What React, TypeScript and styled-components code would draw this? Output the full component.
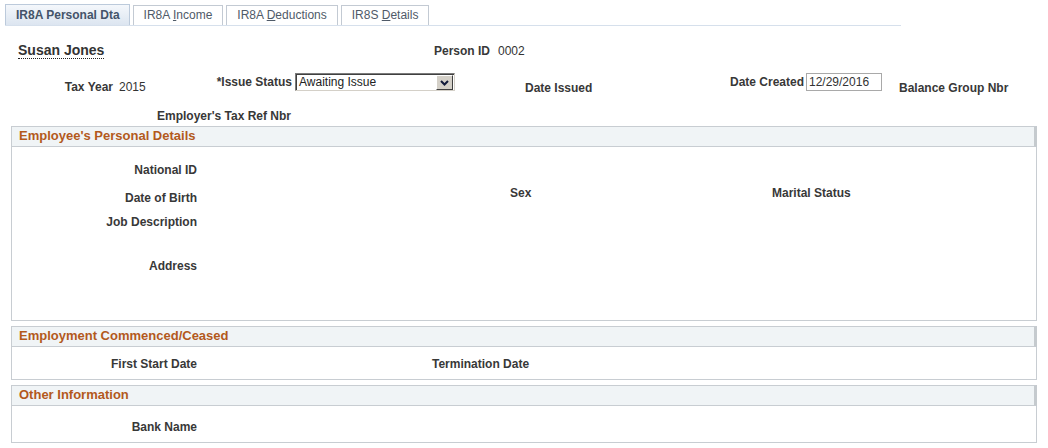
import React from "react";
import styled, { createGlobalStyle, css } from "styled-components";

const Global = createGlobalStyle`
  html, body { margin: 0; padding: 0; background: #ffffff; }
  body { font-family: "Liberation Sans", Arial, sans-serif; font-size: 12px; color: #333333; }
  * { box-sizing: border-box; }
`;

const Page = styled.div`
  width: 1048px;
  height: 448px;
  overflow: hidden;
  display: flex;
  flex-direction: column;
`;

const TabBar = styled.div`
  margin: 4px 0 0 5px;
  width: 896px;
  height: 22px;
  display: flex;
  align-items: flex-end;
  gap: 3px;
  border-bottom: 1px solid #d6e0ec;
`;

const Tab = styled.div<{ $active?: boolean }>`
  height: 20px;
  padding: 0 10px;
  border: 1px solid #c3cad3;
  border-bottom: none;
  background: #ffffff;
  color: #4f5a68;
  font-size: 12px;
  line-height: 19px;
  white-space: nowrap;
  ${(p) =>
    p.$active &&
    css`
      height: 21px;
      padding: 0 9px 0 10px;
      border-color: #bccadb;
      background: linear-gradient(#f4f7fb, #dce5f0);
      color: #44546a;
      font-weight: bold;
      line-height: 20px;
    `}
  u { text-decoration: underline; }
`;

const Row = styled.div<{ $h: number; $pt?: number }>`
  display: flex;
  align-items: flex-start;
  height: ${(p) => p.$h}px;
  padding-top: ${(p) => p.$pt ?? 0}px;
  flex: none;
`;

const Cell = styled.div<{ $w?: number; $right?: boolean; $pt?: number; $pl?: number }>`
  flex: none;
  ${(p) => (p.$w ? `width: ${p.$w}px;` : "")}
  text-align: ${(p) => (p.$right ? "right" : "left")};
  padding-top: ${(p) => p.$pt ?? 0}px;
  padding-left: ${(p) => p.$pl ?? 0}px;
  line-height: 14px;
  white-space: nowrap;
`;

const Label = styled.span`
  font-weight: bold;
  font-size: 12px;
  color: #383838;
`;

const Value = styled.span`
  font-size: 12px;
  color: #333333;
`;

const Name = styled.span`
  display: inline-block;
  margin-left: 18px;
  width: 300px;
  font-size: 14px;
  font-weight: bold;
  line-height: 16px;
  color: #333333;
  span {
    border-bottom: 1px dotted #222;
    display: inline-block;
    line-height: 16px;
  }
`;

const SelectBox = styled.div`
  flex: none;
  margin-left: 3px;
  width: 160px;
  height: 18px;
  display: flex;
  align-items: stretch;
  border: 1px solid;
  border-color: #7c7c7c #d4d0c8 #d4d0c8 #7c7c7c;
  box-shadow: inset 1px 1px 0 #404040;
  background: #ffffff;
`;

const SelectText = styled.div`
  flex: 1;
  padding: 1px 0 0 3px;
  font-size: 12px;
  line-height: 14px;
  color: #222;
`;

const SelectButton = styled.div`
  width: 17px;
  margin: 1px 1px 0 0;
  background: #d4d0c8;
  border: 1px solid;
  border-color: #ffffff #404040 #404040 #ffffff;
  display: flex;
  align-items: center;
  justify-content: center;
`;

const DateInput = styled.div`
  flex: none;
  margin-left: 3px;
  width: 76px;
  height: 18px;
  border: 1px solid #a9a9a9;
  padding: 1px 0 0 2px;
  font-size: 12px;
  line-height: 14px;
  color: #333;
`;

const Section = styled.section<{ $gap?: number }>`
  flex: none;
  margin-left: 11px;
  margin-top: ${(p) => p.$gap ?? 0}px;
  width: 1026px;
`;

const SectionHeader = styled.div`
  height: 21px;
  border: 1px solid #c8cdd2;
  border-right: 3px solid #c5cace;
  background: #f0f4f6;
  padding-left: 7px;
  font-size: 13px;
  font-weight: bold;
  line-height: 17px;
  color: #b3591c;
`;

const SectionBody = styled.div<{ $h: number; $pt: number }>`
  height: ${(p) => p.$h}px;
  padding-top: ${(p) => p.$pt}px;
  border: 1px solid #c8cdd2;
  border-top: none;
  background: #ffffff;
  display: flex;
  flex-direction: column;
`;

const BodyRow = styled.div<{ $h?: number }>`
  display: flex;
  align-items: flex-start;
  ${(p) => (p.$h ? `height: ${p.$h}px;` : "")}
  flex: none;
`;

const Chevron = () => (
  <svg width="9" height="6" viewBox="0 0 9 6">
    <path d="M1 1 L4.5 4.5 L8 1" fill="none" stroke="#111a3a" strokeWidth="2" />
  </svg>
);

export default function App() {
  return (
    <>
      <Global />
      <Page>
        <TabBar>
          <Tab $active>IR8A Personal Dta</Tab>
          <Tab>
            IR8A <u>I</u>ncome
          </Tab>
          <Tab>
            IR8A <u>D</u>eductions
          </Tab>
          <Tab>
            IR8S <u>D</u>etails
          </Tab>
        </TabBar>

        <Row $h={47} $pt={16}>
          <Name>
            <span>Susan Jones</span>
          </Name>
          <Cell $w={172} $right $pt={2}>
            <Label>Person ID</Label>
          </Cell>
          <Cell $pl={8} $pt={2}>
            <Value>0002</Value>
          </Cell>
        </Row>

        <Row $h={35}>
          <Cell $w={113} $right $pt={7}>
            <Label>Tax Year</Label>
          </Cell>
          <Cell $w={103} $pl={6} $pt={7}>
            <Value>2015</Value>
          </Cell>
          <Cell $w={76} $right $pt={2}>
            <Label>*Issue Status</Label>
          </Cell>
          <SelectBox>
            <SelectText>Awaiting Issue</SelectText>
            <SelectButton>
              <Chevron />
            </SelectButton>
          </SelectBox>
          <Cell $w={275} $pl={70} $pt={8}>
            <Label>Date Issued</Label>
          </Cell>
          <Cell $w={73} $right $pt={2}>
            <Label>Date Created</Label>
          </Cell>
          <DateInput>12/29/2016</DateInput>
          <Cell $pl={17} $pt={8}>
            <Label>Balance Group Nbr</Label>
          </Cell>
        </Row>

        <Row $h={18} $pt={1}>
          <Cell $w={291} $right>
            <Label>Employer's Tax Ref Nbr</Label>
          </Cell>
        </Row>

        <Section>
          <SectionHeader>Employee's Personal Details</SectionHeader>
          <SectionBody $h={174} $pt={16}>
            <BodyRow $h={23}>
              <Cell $w={185} $right>
                <Label>National ID</Label>
              </Cell>
            </BodyRow>
            <BodyRow $h={29}>
              <Cell $w={185} $right $pt={5}>
                <Label>Date of Birth</Label>
              </Cell>
              <Cell $w={313} />
              <Cell $w={262}>
                <Label>Sex</Label>
              </Cell>
              <Cell>
                <Label>Marital Status</Label>
              </Cell>
            </BodyRow>
            <BodyRow $h={44}>
              <Cell $w={185} $right>
                <Label>Job Description</Label>
              </Cell>
            </BodyRow>
            <BodyRow>
              <Cell $w={185} $right>
                <Label>Address</Label>
              </Cell>
            </BodyRow>
          </SectionBody>
        </Section>

        <Section $gap={5}>
          <SectionHeader>Employment Commenced/Ceased</SectionHeader>
          <SectionBody $h={33} $pt={10}>
            <BodyRow>
              <Cell $w={185} $right>
                <Label>First Start Date</Label>
              </Cell>
              <Cell $w={235} />
              <Cell>
                <Label>Termination Date</Label>
              </Cell>
            </BodyRow>
          </SectionBody>
        </Section>

        <Section $gap={5}>
          <SectionHeader>Other Information</SectionHeader>
          <SectionBody $h={37} $pt={14}>
            <BodyRow>
              <Cell $w={185} $right>
                <Label>Bank Name</Label>
              </Cell>
            </BodyRow>
          </SectionBody>
        </Section>
      </Page>
    </>
  );
}
